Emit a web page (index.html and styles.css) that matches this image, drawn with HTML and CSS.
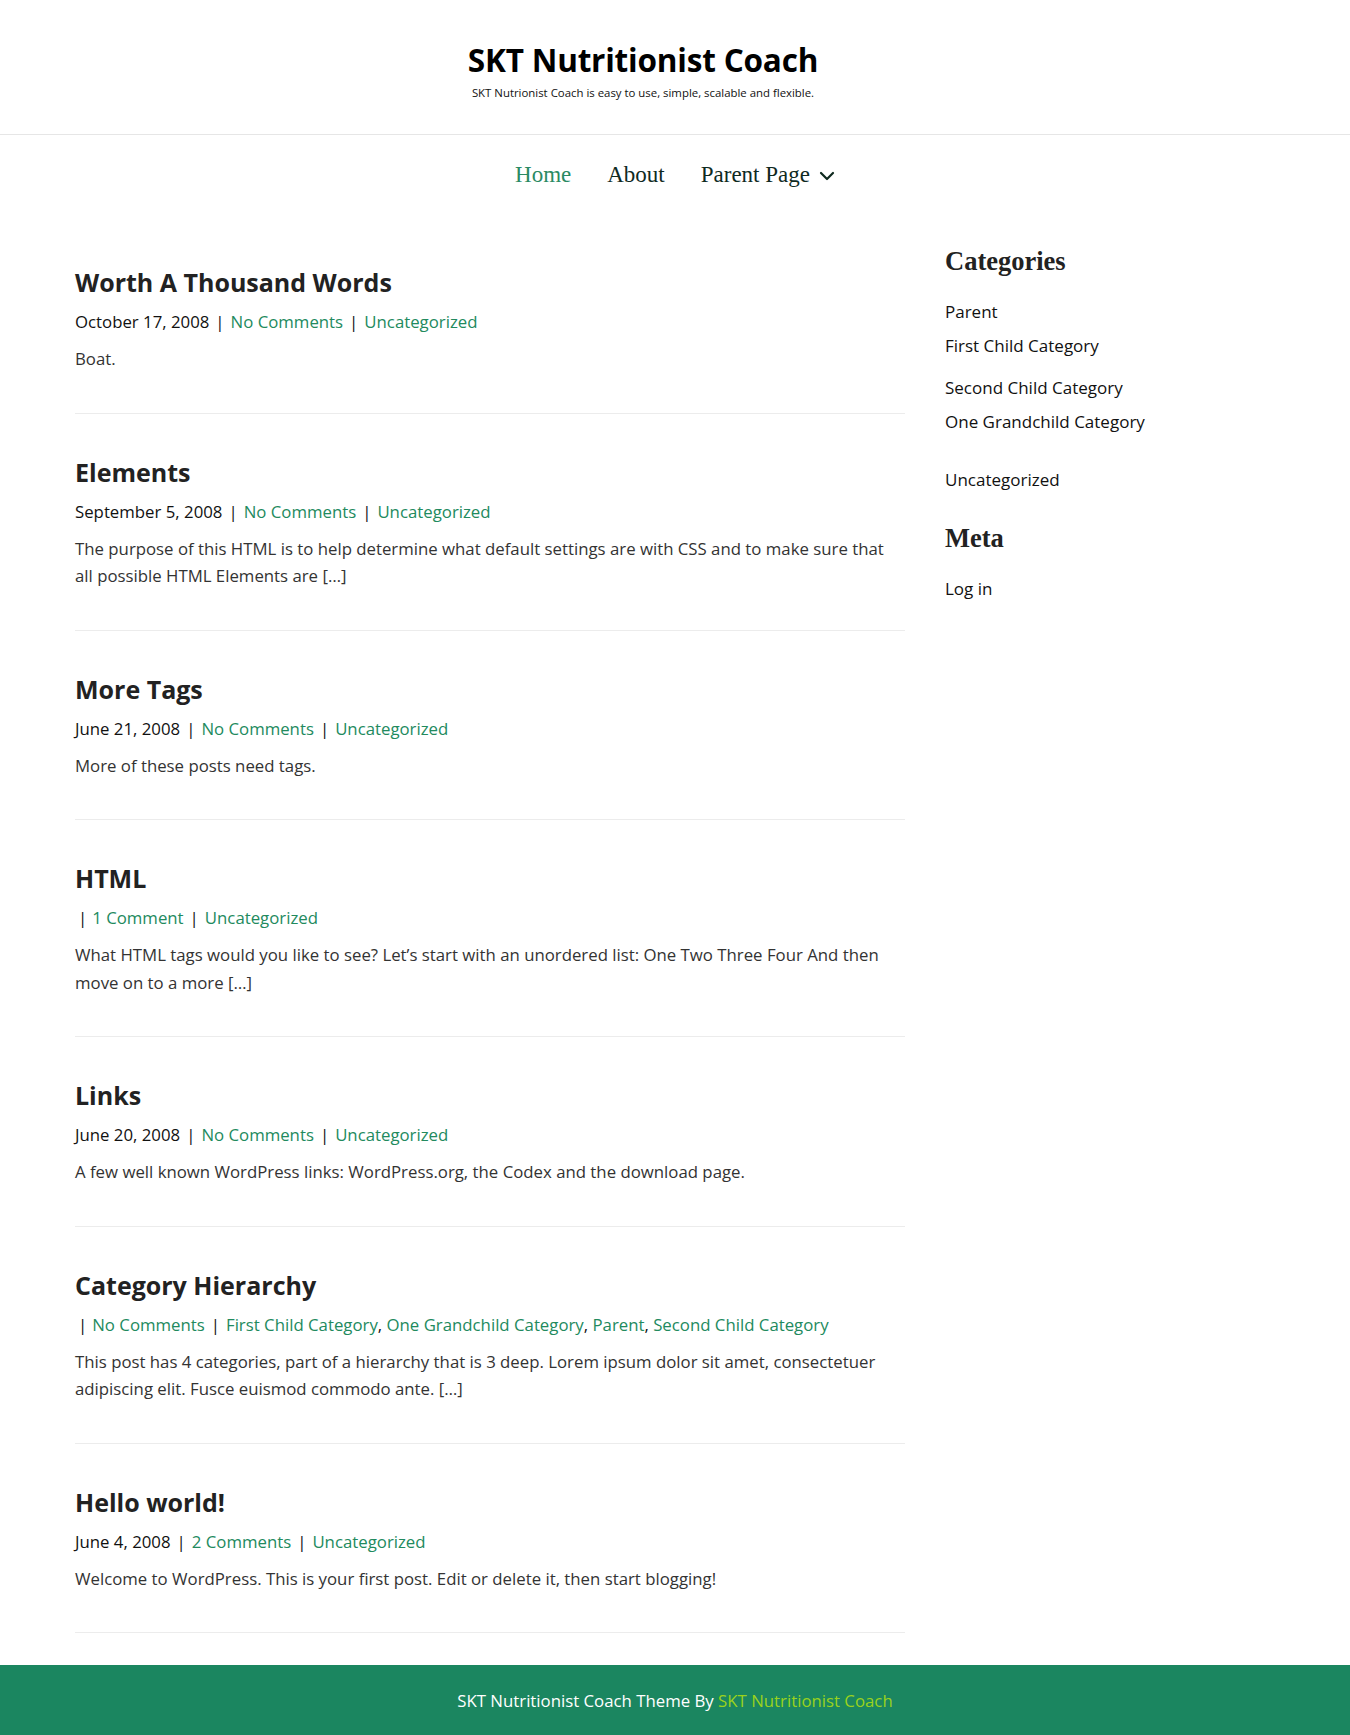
FILE: index.html
```html
<!DOCTYPE html>
<html lang="en">
<head>
<meta charset="utf-8">
<title>SKT Nutritionist Coach</title>
<link rel="stylesheet" href="styles.css">
</head>
<body>
<header class="site-header">
  <div class="branding">
    <h1 class="site-title">SKT Nutritionist Coach</h1>
    <p class="site-desc">SKT Nutrionist Coach is easy to use, simple, scalable and flexible.</p>
  </div>
</header>
<nav class="main-nav">
  <ul class="menu">
    <li><a class="current" href="#">Home</a></li>
    <li><a href="#">About</a></li>
    <li><a href="#">Parent Page<svg class="chev" width="16" height="10" viewBox="0 0 16 10"><path d="M2 2 L8 8 L14 2" fill="none" stroke="#0f2a1f" stroke-width="2.2" stroke-linecap="round" stroke-linejoin="round"/></svg></a></li>
  </ul>
</nav>
<div class="container">
  <main class="posts">
    <article class="post">
      <h2 class="post-title">Worth A Thousand Words</h2>
      <div class="meta">October 17, 2008<span class="sep">|</span><a href="#">No Comments</a><span class="sep">|</span><a href="#">Uncategorized</a></div>
      <p class="excerpt">Boat.</p>
    </article>
    <article class="post">
      <h2 class="post-title">Elements</h2>
      <div class="meta">September 5, 2008<span class="sep">|</span><a href="#">No Comments</a><span class="sep">|</span><a href="#">Uncategorized</a></div>
      <p class="excerpt">The purpose of this HTML is to help determine what default settings are with CSS and to make sure that all possible HTML Elements are […]</p>
    </article>
    <article class="post">
      <h2 class="post-title">More Tags</h2>
      <div class="meta">June 21, 2008<span class="sep">|</span><a href="#">No Comments</a><span class="sep">|</span><a href="#">Uncategorized</a></div>
      <p class="excerpt">More of these posts need tags.</p>
    </article>
    <article class="post">
      <h2 class="post-title">HTML</h2>
      <div class="meta"><span class="sep first">|</span><a href="#">1 Comment</a><span class="sep">|</span><a href="#">Uncategorized</a></div>
      <p class="excerpt">What HTML tags would you like to see? Let’s start with an unordered list: One Two Three Four And then move on to a more […]</p>
    </article>
    <article class="post">
      <h2 class="post-title">Links</h2>
      <div class="meta">June 20, 2008<span class="sep">|</span><a href="#">No Comments</a><span class="sep">|</span><a href="#">Uncategorized</a></div>
      <p class="excerpt">A few well known WordPress links: WordPress.org, the Codex and the download page.</p>
    </article>
    <article class="post">
      <h2 class="post-title">Category Hierarchy</h2>
      <div class="meta"><span class="sep first">|</span><a href="#">No Comments</a><span class="sep">|</span><a href="#">First Child Category</a>, <a href="#">One Grandchild Category</a>, <a href="#">Parent</a>, <a href="#">Second Child Category</a></div>
      <p class="excerpt">This post has 4 categories, part of a hierarchy that is 3 deep. Lorem ipsum dolor sit amet, consectetuer adipiscing elit. Fusce euismod commodo ante. […]</p>
    </article>
    <article class="post">
      <h2 class="post-title">Hello world!</h2>
      <div class="meta">June 4, 2008<span class="sep">|</span><a href="#">2 Comments</a><span class="sep">|</span><a href="#">Uncategorized</a></div>
      <p class="excerpt">Welcome to WordPress. This is your first post. Edit or delete it, then start blogging!</p>
    </article>
  </main>
  <aside class="sidebar">
    <section class="widget">
      <h3 class="widget-title">Categories</h3>
      <ul class="wlist">
        <li class="gap-after">Parent</li>
        <li class="gap-small">First Child Category</li>
        <li>Second Child Category</li>
        <li class="gap-large">One Grandchild Category</li>
        <li>Uncategorized</li>
      </ul>
    </section>
    <section class="widget">
      <h3 class="widget-title">Meta</h3>
      <ul class="wlist">
        <li>Log in</li>
      </ul>
    </section>
  </aside>
</div>
<footer class="site-footer">
  SKT Nutritionist Coach Theme By <a href="#">SKT Nutritionist Coach</a>
</footer>
</body>
</html>
```
FILE: styles.css
```css
* { box-sizing: border-box; }
body {
  margin: 0;
  font-family: "Open Sans", "Noto Sans", sans-serif;
  color: #222;
  background: #fff;
}
a { text-decoration: none; color: #228a5e; }

.site-header {
  height: 135px;
  border-bottom: 1px solid #e6e6e6;
  display: flex;
  justify-content: center;
  padding-right: 64px;
}
.branding { text-align: center; padding-top: 38px; }
.site-title {
  margin: 0;
  font-family: "Open Sans", sans-serif;
  font-weight: 700;
  font-size: 31.5px;
  line-height: 44px;
  color: #000;
  letter-spacing: -0.2px;
}
.site-desc {
  margin: 2px 0 0;
  font-size: 11.4px;
  line-height: 18px;
  color: #111;
}

.main-nav { height: 80px; display: flex; justify-content: center; align-items: center; }
.menu { list-style: none; margin: 0; padding: 0; display: flex; gap: 36px; }
.menu a {
  font-family: "Liberation Serif", "DejaVu Serif", serif;
  font-size: 23px;
  color: #0f2a1f;
  display: flex; align-items: center; gap: 9px;
}
.menu a.current { color: #2a8a63; }
.chev { display: block; margin-top: 1px; }

.container {
  width: 1200px;
  margin: 0 auto;
  padding-top: 9px;
  display: flex;
  gap: 40px;
  align-items: flex-start;
}
.posts { width: 830px; }
.post {
  padding: 42px 0 40px;
  border-bottom: 1px solid #ececec;
}
.post-title {
  margin: 0 0 10px;
  font-family: "Open Sans", sans-serif;
  font-weight: 700;
  font-size: 25px;
  line-height: 32px;
  color: #222;
}
.meta { font-size: 16.8px; line-height: 28px; color: #111; margin-bottom: 9px; }
.sep { margin: 0 6px; color: #111; }
.sep.first { margin-left: 3px; margin-right: 5px; }
.excerpt { margin: 0; font-size: 16.8px; line-height: 27.5px; color: #333; }

.sidebar { width: 330px; padding-top: 20px; }
.widget-title {
  margin: 0 0 17px;
  font-family: "Liberation Serif", "DejaVu Serif", serif;
  font-weight: 700;
  font-size: 26.5px;
  line-height: 34px;
  color: #222;
}
.wlist { list-style: none; margin: 0 0 24px; padding: 0; }
.wlist li { font-size: 17px; line-height: 34px; color: #111; }
.wlist li.gap-small { margin-bottom: 8px; }
.wlist li.gap-large { margin-bottom: 24px; }

.site-footer {
  margin-top: 32px;
  height: 71px;
  background: #1b8660;
  color: #fff;
  text-align: center;
  font-size: 16.8px;
  line-height: 71px;
}
.site-footer a { color: #9ad21c; }
```
